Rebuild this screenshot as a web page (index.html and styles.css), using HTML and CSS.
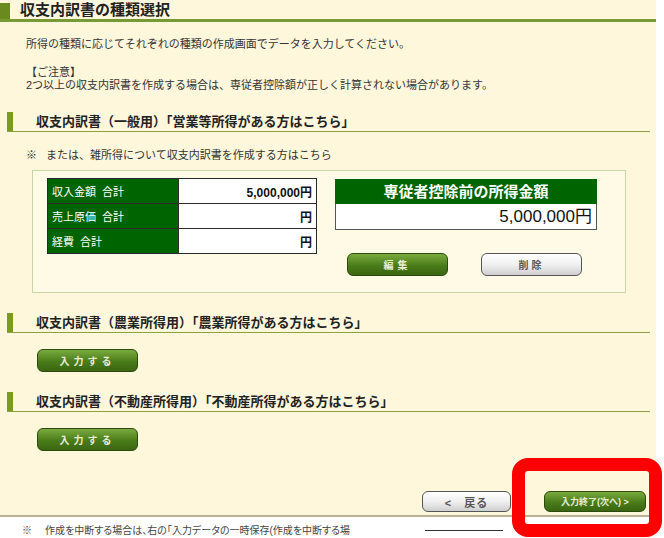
FILE: index.html
```html
<!DOCTYPE html>
<html lang="ja">
<head>
    <meta charset="UTF-8">
    <title>収支内訳書の種類選択</title>
    <link rel="stylesheet" href="styles.css">
</head>
<body>
    <div class="page">
        <div class="title">
            <h1>収支内訳書の種類選択</h1>
        </div>

        <div class="intro">
            <p>所得の種類に応じてそれぞれの種類の作成画面でデータを入力してください。</p>
            <p class="caution">【ご注意】<br>2つ以上の収支内訳書を作成する場合は、専従者控除額が正しく計算されない場合があります。</p>
        </div>

        <div class="sec">
            <h2>収支内訳書（一般用）「営業等所得がある方はこちら」</h2>
        </div>
        <p class="note"><span class="mark">※</span>または、雑所得について収支内訳書を作成する方はこちら</p>

        <div class="box">
            <table class="totals">
                <tr><th>収入金額&nbsp;&nbsp;合計</th><td>5,000,000円</td></tr>
                <tr><th>売上原価&nbsp;&nbsp;合計</th><td>円</td></tr>
                <tr><th>経費&nbsp;&nbsp;合計</th><td>円</td></tr>
            </table>
            <div class="side">
                <div class="income">
                    <div class="income-head">専従者控除前の所得金額</div>
                    <div class="income-value">5,000,000円</div>
                </div>
                <div class="side-buttons">
                    <button class="btn btn-green">編集</button>
                    <button class="btn btn-gray">削除</button>
                </div>
            </div>
        </div>

        <div class="sec">
            <h2>収支内訳書（農業所得用）「農業所得がある方はこちら」</h2>
        </div>
        <button class="btn btn-green btn-input">入力する</button>

        <div class="sec">
            <h2>収支内訳書（不動産所得用）「不動産所得がある方はこちら」</h2>
        </div>
        <button class="btn btn-green btn-input">入力する</button>

        <div class="nav">
            <button class="btn btn-gray btn-back">&lt;&nbsp;&nbsp;&nbsp;戻る</button>
            <button class="btn btn-green btn-next">入力終了(次へ)&nbsp;&gt;</button>
        </div>
    </div>

    <div class="foot">
        <p class="foot-note"><span class="mark">※</span>作成を中断する場合は、右の「入力データの一時保存(作成を中断する場</p>
        <div class="save"></div>
    </div>

    <div class="highlight"></div>
</body>
</html>
```

FILE: styles.css
```css
body {
    margin: 0;
    background-color: #fff;
    font-family: "Liberation Sans", "Noto Sans CJK JP", sans-serif;
    color: #333;
    position: relative;
    height: 538px;
    overflow: hidden;
}
.page {
    width: 656px;
    height: 515px;
    background-color: #fef7dc;
    border-bottom: 2px solid #b7b293;
}
.title {
    display: flex;
    height: 19px;
    border-bottom: 3px solid #789a36;
}
.title::before {
    content: "";
    width: 10px;
    margin-top: 3px;
    background-color: #6b8a1e;
}
.title h1 {
    margin: 0 0 0 10px;
    font-size: 15px;
    line-height: 19px;
    color: #222;
}
.intro {
    padding-left: 26px;
    font-size: 11px;
    line-height: 13px;
}
.intro p {
    margin: 16px 0 0;
}
.intro .caution {
    margin-top: 15px;
}
.sec {
    display: flex;
    width: 643px;
    height: 19px;
    margin: 20px 0 0 7px;
    border-bottom: 1px solid #8aa33c;
}
.sec::before {
    content: "";
    width: 6px;
    background-color: #7c9a1c;
}
.sec h2 {
    margin: 0 0 0 23px;
    font-size: 13px;
    line-height: 19px;
    color: #222;
}
.note {
    display: flex;
    margin: 16px 0 0 26px;
    font-size: 11px;
    line-height: 14px;
}
.mark {
    flex: none;
    width: 20px;
}
.box {
    display: flex;
    width: 594px;
    height: 123px;
    box-sizing: border-box;
    margin: 8px 0 0 32px;
    padding: 7px 0 0 14px;
    border: 1px solid #c9d5a6;
    background-color: #fffae6;
}
.totals {
    border-collapse: collapse;
    height: 75px;
    font-size: 11px;
}
.totals th,
.totals td {
    height: 24px;
    padding: 0 4px;
    border: 1px solid #2a2a2a;
}
.totals th {
    width: 122px;
    background-color: #006400;
    color: #fff;
    font-weight: normal;
    text-align: left;
}
.totals td {
    width: 129px;
    background-color: #fff;
    color: #111;
    font-weight: bold;
    font-size: 12px;
    text-align: right;
}
.side {
    margin-left: 18px;
    margin-top: 1px;
}
.income {
    width: 262px;
}
.income-head {
    height: 25px;
    background-color: #006400;
    color: #fff;
    font-size: 15px;
    font-weight: bold;
    line-height: 25px;
    text-align: center;
}
.income-value {
    height: 26px;
    box-sizing: border-box;
    background-color: #fff;
    border: 1px solid #555;
    border-top: none;
    padding-right: 4px;
    font-size: 17px;
    line-height: 25px;
    text-align: right;
    color: #111;
}
.side-buttons {
    display: flex;
    gap: 33px;
    margin: 23px 0 0 12px;
}
.btn {
    display: block;
    width: 101px;
    height: 23px;
    padding: 0;
    border-radius: 6px;
    font-family: "Liberation Sans", "Noto Sans CJK JP", sans-serif;
    font-size: 10px;
    font-weight: bold;
    cursor: pointer;
}
.btn-green {
    background: linear-gradient(#7aab3e, #4a7c1a 55%, #3a6610);
    border: 1px solid #2c4a0c;
    color: #e8eed8;
    letter-spacing: 4px;
}
.btn-gray {
    background: linear-gradient(#ffffff, #f0f0f0 50%, #cfcfcf);
    border: 1px solid #555;
    color: #555;
    letter-spacing: 3px;
}
.btn-input {
    margin: 16px 0 0 37px;
}
.nav {
    display: flex;
    justify-content: flex-end;
    gap: 33px;
    margin-top: 40px;
    padding-right: 10px;
}
.btn-back {
    width: 89px;
    height: 21px;
    font-size: 11px;
    letter-spacing: 1px;
}
.btn-next {
    width: 102px;
    height: 21px;
    font-size: 9px;
    letter-spacing: 0;
}
.foot {
    display: flex;
}
.foot-note {
    display: flex;
    width: 320px;
    margin: 8px 0 0 22px;
    font-size: 10px;
    line-height: 12px;
    white-space: nowrap;
    font-feature-settings: "palt";
    color: #444;
}
.foot-note .mark {
    width: 23px;
}
.save {
    width: 78px;
    margin: 13px 0 0 83px;
    border-top: 1px solid #333;
}
.highlight {
    position: absolute;
    left: 512px;
    top: 458px;
    width: 150px;
    height: 79px;
    box-sizing: border-box;
    border: 13px solid #f00;
    border-radius: 16px;
}
```
